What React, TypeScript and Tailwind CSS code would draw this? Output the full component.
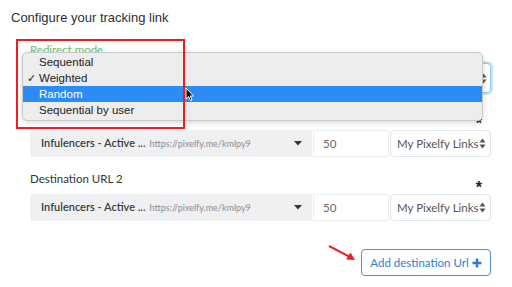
import React from "react";

const UpDown = () => (
  <svg width="7" height="11" viewBox="0 0 7 11" className="shrink-0">
    <path d="M3.5 0.5 L6.5 4.5 L0.5 4.5 Z" fill="#555" />
    <path d="M3.5 10.5 L6.5 6.5 L0.5 6.5 Z" fill="#555" />
  </svg>
);

const Row = () => (
  <div className="flex h-[27px]" style={{ fontFamily: "Lato, 'Open Sans', sans-serif" }}>
    <div className="flex w-[282px] items-center whitespace-nowrap rounded-l-[3px] bg-[#eff0f2] pl-[11px] pr-[10px]">
      <span className="text-[11px] font-semibold text-[#3d3d3d]">Infulencers - Active ...</span>
      <span className="ml-[4px] text-[9px] text-[#8a8d92]">https://pixelfy.me/kmlpy9</span>
      <span className="ml-auto">
        <svg width="8" height="5" viewBox="0 0 8 5">
          <path d="M0 0 L8 0 L4 4.5 Z" fill="#333" />
        </svg>
      </span>
    </div>
    <div className="ml-[1px] flex w-[76px] items-center border border-[#eceef1] bg-white pl-[9px] text-[11.5px] text-[#666]">
      50
    </div>
    <div className="ml-[1px] flex w-[101px] items-center justify-between whitespace-nowrap rounded-[4px] border border-[#e3e5e9] bg-white pl-[6px] pr-[5px] text-[11.5px] text-[#555]">
      <span>My Pixelfy Links</span>
      <UpDown />
    </div>
  </div>
);

const LabelRow = ({ text }: { text: string }) => (
  <div className="mt-[12px] flex h-5 items-start justify-between pr-[9px]">
    <span className="text-[11.5px] leading-5 text-[#333]">{text}</span>
    <span className="mt-[11px] text-[16px] font-bold leading-none text-[#222]" style={{ fontFamily: "'Liberation Sans', sans-serif" }}>
      *
    </span>
  </div>
);

export default function App() {
  const items = ["Sequential", "Weighted", "Random", "Sequential by user"];
  return (
    <div className="relative h-[287px] w-[512px] overflow-hidden bg-white" style={{ fontFamily: "Lato, sans-serif" }}>
      <div className="pl-[11px] pt-[8px]">
        <div className="text-[13px] leading-5 text-[#2f2f2f]" style={{ fontFamily: "'Liberation Sans', sans-serif" }}>
          Configure your tracking link
        </div>
      </div>
      <div className="pl-[30px]" style={{ width: 491 }}>
        <div className="mt-[14px] h-4 text-[11.5px] leading-4 text-[#6abf69]">Redirect mode</div>
        <div className="mt-[5px] flex h-[30px] items-center justify-end rounded-[4px] border border-[#8fcbe6] bg-white pr-[3px] ring-2 ring-[#c4e6f4]">
          <UpDown />
        </div>
        <LabelRow text="Destination URL 1" />
        <div className="mt-[5px]">
          <Row />
        </div>
        <LabelRow text="Destination URL 2" />
        <div className="mt-[5px]">
          <Row />
        </div>
        <div className="mt-[28px] flex justify-end">
          <button className="flex h-[27px] w-[130px] items-center justify-center gap-[3px] whitespace-nowrap rounded-[4px] border border-[#4a8fd6] bg-white text-[11.5px] text-[#2d7dcc]">
            <span>Add destination Url</span>
            <svg width="10" height="10" viewBox="0 0 10 10">
              <path d="M5 0.5 V9.5 M0.5 5 H9.5" stroke="#2d7dcc" strokeWidth="2.4" />
            </svg>
          </button>
        </div>
      </div>

      {/* dropdown menu overlay */}
      <div
        className="absolute left-[22px] top-[52px] w-[461px] rounded-[5px] border border-[#c9c9c9] bg-[#ededed] pb-[2px] pt-[1px] shadow-[0_2px_6px_rgba(0,0,0,0.15)]"
        style={{ fontFamily: "'Liberation Sans', Arial, sans-serif" }}
      >
        {items.map((it) => {
          const active = it === "Random";
          return (
            <div
              key={it}
              className={
                active
                  ? "relative flex h-4 items-center bg-[#2b8cf5] pl-[16px] text-[11.5px] leading-4 text-white"
                  : "relative flex h-4 items-center pl-[16px] text-[11.5px] leading-4 text-[#222]"
              }
            >
              {it === "Weighted" && (
                <span className="absolute left-[4px] top-0 text-[11px] leading-4">✓</span>
              )}
              {it}
            </div>
          );
        })}
      </div>

      {/* red annotation box */}
      <div className="absolute left-[16px] top-[39px] h-[90px] w-[169px] border-2 border-[#ee1c25]" />

      {/* cursor */}
      <svg className="absolute left-[185px] top-[87px]" width="10" height="15" viewBox="0 0 10 15">
        <path d="M1 1 L1 12 L3.6 9.6 L5.4 13.6 L7 12.9 L5.3 9 L8.6 9 Z" fill="#111" stroke="#fff" strokeWidth="1" />
      </svg>

      {/* red arrow */}
      <svg className="absolute left-[326px] top-[243px]" width="34" height="22" viewBox="0 0 34 22">
        <path d="M3 3 L25 14.5" stroke="#e8202a" strokeWidth="2" />
        <path d="M29 17 L20 16.5 L24.5 9.5 Z" fill="#e8202a" />
      </svg>
    </div>
  );
}
